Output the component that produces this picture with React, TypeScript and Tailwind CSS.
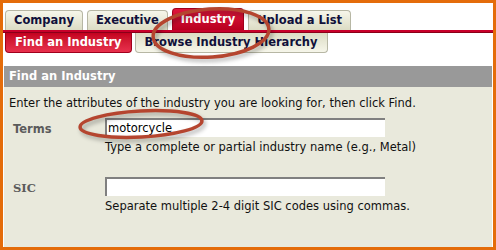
import React from 'react';

const font = { fontFamily: '"DejaVu Sans", Verdana, sans-serif' };

const TopTab = ({ label, active }: { label: string; active?: boolean }) => (
  <div
    className={
      active
        ? 'h-[22px] px-[8px] flex items-center rounded-t-[4px] border border-b-0 border-[#a0001c] bg-gradient-to-b from-[#e0163c] to-[#b8001f] text-white font-bold text-[11.5px]'
        : 'h-[20px] px-[8px] flex items-center rounded-t-[4px] border border-b-0 border-[#b7b7a4] bg-gradient-to-b from-[#f6f6ea] to-[#dcdcc4] text-[#10103a] font-bold text-[11.5px]'
    }
  >
    {label}
  </div>
);

const SubTab = ({ label, active }: { label: string; active?: boolean }) => (
  <div
    className={
      active
        ? 'h-[20px] px-[9px] flex items-center rounded-b-[4px] border border-t-0 border-[#a0001c] bg-gradient-to-b from-[#c4001f] to-[#e8304d] text-white font-bold text-[11.5px]'
        : 'h-[20px] px-[9px] flex items-center rounded-b-[4px] border border-t-0 border-[#b7b7a4] bg-gradient-to-b from-[#dcdcc4] to-[#f6f6ea] text-[#10103a] font-bold text-[11.5px]'
    }
  >
    {label}
  </div>
);

export default function App() {
  return (
    <div className="w-[496px] h-[250px] bg-[#e46c0a] pt-[3px] pl-[3px] pr-[3px] pb-[3px] overflow-hidden" style={font}>
      <div className="relative w-full h-full bg-white flex flex-col">
        <div className="flex items-end gap-[4px] pl-[2px] pt-[5px]">
          <TopTab label="Company" />
          <TopTab label="Executive" />
          <TopTab label="Industry" active />
          <TopTab label="Upload a List" />
        </div>
        <div className="h-[3px] bg-[#c8002a] border-b border-[#8a0018]" />
        <div className="flex gap-[3px] pl-[2px]">
          <SubTab label="Find an Industry" active />
          <SubTab label="Browse Industry Hierarchy" />
        </div>
        <div className="mt-[13px] ml-[1px] mr-[1px] flex-1 flex flex-col bg-[#e9e9dc]">
          <div className="h-[21px] bg-[#999999] text-white font-bold text-[11.5px] flex items-center pl-[5px]">
            Find an Industry
          </div>
          <div className="text-[11.5px] leading-[14px] text-[#111] pl-[5px] pt-[9px]">
            Enter the attributes of the industry you are looking for, then click Find.
          </div>
          <div className="flex mt-[8px]">
            <div className="w-[101px] pl-[9px] pt-[3px] text-[11.5px] font-bold text-[#5b5b5b]">Terms</div>
            <div className="flex flex-col">
              <div className="w-[280px] h-[19px] bg-white border-t-2 border-l-2 border-[#808080] text-[11.5px] text-black pl-[1px] leading-[16px]">
                motorcycle
              </div>
              <div className="text-[11.5px] leading-[14px] text-[#111] mt-[3px]">
                Type a complete or partial industry name (e.g., Metal)
              </div>
            </div>
          </div>
          <div className="flex mt-[23px]">
            <div className="w-[101px] pl-[9px] pt-[3px] text-[11.5px] font-bold text-[#5b5b5b]" style={{ fontFamily: '"DejaVu Serif", Georgia, serif' }}>SIC</div>
            <div className="flex flex-col">
              <div className="w-[280px] h-[19px] bg-white border-t-2 border-l-2 border-[#808080]" />
              <div className="text-[11.5px] leading-[14px] text-[#111] mt-[3px]">
                Separate multiple 2-4 digit SIC codes using commas.
              </div>
            </div>
          </div>
        </div>
        <svg className="absolute left-0 top-0 pointer-events-none" width="490" height="244" viewBox="0 0 490 244">
          <defs>
            <filter id="sh" x="-20%" y="-50%" width="140%" height="200%">
              <feGaussianBlur stdDeviation="2" />
            </filter>
          </defs>
          <g transform="rotate(-4 208 30)">
            <ellipse cx="210" cy="33" rx="58" ry="24" fill="none" stroke="#000" strokeOpacity="0.3" strokeWidth="3.5" filter="url(#sh)" />
            <ellipse cx="208" cy="30" rx="58" ry="24" fill="none" stroke="#b5452f" strokeWidth="3.5" />
          </g>
          <g transform="rotate(-3 138 121)">
            <ellipse cx="140" cy="124" rx="61" ry="13" fill="none" stroke="#000" strokeOpacity="0.3" strokeWidth="3.5" filter="url(#sh)" />
            <ellipse cx="138" cy="121" rx="61" ry="13" fill="none" stroke="#b5452f" strokeWidth="3.5" />
          </g>
        </svg>
      </div>
    </div>
  );
}
